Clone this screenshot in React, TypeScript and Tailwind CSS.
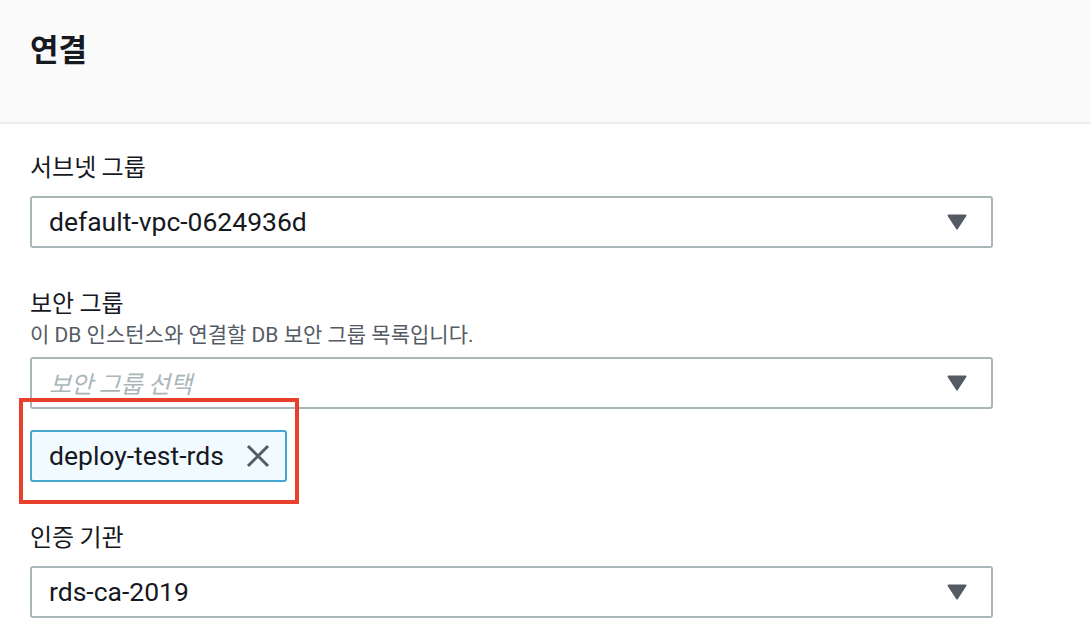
const latin = "font-['Roboto','Noto_Sans_CJK_KR',sans-serif]";
const hangul = "font-['Noto_Sans_CJK_KR','Noto_Sans',sans-serif]";

function Caret() {
  return (
    <svg width="20" height="16" viewBox="0 0 20 16" className="shrink-0">
      <path d="M1.5 1.5 H18.5 L10 14.5 Z" fill="#545b64" stroke="#545b64" strokeWidth="2" strokeLinejoin="round" />
    </svg>
  );
}

function CloseIcon() {
  return (
    <svg width="24" height="24" viewBox="0 0 24 24" className="shrink-0">
      <path d="M2 2 L22 22 M22 2 L2 22" stroke="#545b64" strokeWidth="3" strokeLinecap="butt" />
    </svg>
  );
}

function Select({ value, placeholder }: { value?: string; placeholder?: string }) {
  return (
    <div className="flex h-[52px] w-[963px] items-center justify-between rounded-[3px] border-2 border-[#aab7b8] bg-white pl-[17px] pr-[24px]">
      {value ? (
        <span className={`${latin} text-[26.5px] leading-[32px] text-[#16191f]`}>{value}</span>
      ) : (
        <span className={`${hangul} text-[24px] italic leading-[30px] text-[#aab7b8]`}>{placeholder}</span>
      )}
      <Caret />
    </div>
  );
}

function Label({ children }: { children: string }) {
  return <div className={`${hangul} text-[24px] leading-[28px] text-[#16191f]`}>{children}</div>;
}

export default function App() {
  return (
    <div className="relative min-h-[642px] w-[1090px] bg-white">
      <div className="h-[124px] border-b-2 border-[#eaeded] bg-[#fafafa] pl-[30px] pt-[30px]">
        <h2 className={`${hangul} text-[31px] font-bold leading-[36px] text-[#16191f]`}>연결</h2>
      </div>

      <div className="pl-[30px] pt-[28px]">
        <Label>서브넷 그룹</Label>
        <div className="mt-[16px]">
          <Select value="default-vpc-0624936d" />
        </div>

        <div className="mt-[40px]">
          <Label>보안 그룹</Label>
        </div>
        <div className={`${latin} mt-[7px] text-[21px] leading-[24px] text-[#545b64]`}>
          이 DB 인스턴스와 연결할 DB 보안 그룹 목록입니다.
        </div>
        <div className="mt-[10px]">
          <Select placeholder="보안 그룹 선택" />
        </div>

        <div className="mt-[21px] flex">
          <div className="flex h-[52px] items-center gap-[22px] rounded-[3px] border-2 border-[#44a6cf] bg-[#f1faff] pl-[17px] pr-[15px]">
            <span className={`${latin} text-[26.5px] leading-[32px] text-[#16191f]`}>deploy-test-rds</span>
            <CloseIcon />
          </div>
        </div>

        <div className="mt-[40px]">
          <Label>인증 기관</Label>
        </div>
        <div className="mt-[16px]">
          <Select value="rds-ca-2019" />
        </div>
      </div>

      <div className="pointer-events-none absolute left-[19px] top-[398px] h-[106px] w-[280px] border-4 border-[#e8412b]" />
    </div>
  );
}
